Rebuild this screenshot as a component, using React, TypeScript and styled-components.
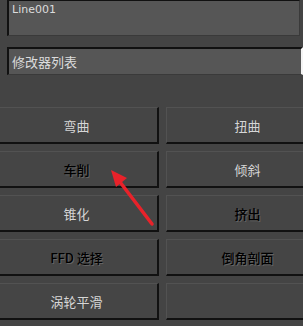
import styled, { createGlobalStyle } from 'styled-components'

const GlobalStyle = createGlobalStyle`
    html, body {
        margin: 0;
        padding: 0;
        background: #444444;
        overflow: hidden;
    }
`

const modifiers: { label: string; dark?: boolean }[] = [
    { label: '弯曲' },
    { label: '扭曲' },
    { label: '车削', dark: true },
    { label: '倾斜' },
    { label: '锥化' },
    { label: '挤出', dark: true },
    { label: 'FFD 选择', dark: true },
    { label: '倒角剖面', dark: true },
    { label: '涡轮平滑' },
    { label: '' },
    { label: '' },
    { label: '' },
]

export default function App() {
    return <Panel>
        <GlobalStyle />
        <NameField>Line001</NameField>
        <ModifierList>修改器列表</ModifierList>
        <ButtonGrid>
            {modifiers.map((m, i) => (
                <ModButton key={i} $dark={m.dark}>{m.label}</ModButton>
            ))}
        </ButtonGrid>
        <Arrow width="60" height="70" viewBox="0 0 60 70">
            <line x1="50" y1="59" x2="18" y2="17" stroke="#e8222a" strokeWidth="3.5" strokeLinecap="round" />
            <polygon points="9,5 25,13 14,22" fill="#e8222a" />
        </Arrow>
    </Panel>
}

const Panel = styled.div`
    position: relative;
    width: 303px;
    height: 326px;
    overflow: hidden;
    background: #444444;
    font-family: "Noto Sans CJK SC", "DejaVu Sans", sans-serif;
`

const NameField = styled.div`
    box-sizing: border-box;
    margin-left: 7px;
    width: 293px;
    height: 36px;
    padding: 2px 0 0 3px;
    background: #565656;
    border-top: 1px solid #111;
    border-left: 2px solid #111;
    border-right: 1px solid #3a3a3a;
    border-bottom: 1px solid #3a3a3a;
    color: #dcdcdc;
    font-family: "DejaVu Sans", sans-serif;
    font-size: 11px;
    line-height: 13px;
`

const ModifierList = styled.div`
    box-sizing: border-box;
    margin: 11px 0 0 7px;
    width: 296px;
    height: 28px;
    padding-left: 3px;
    background: #565656;
    border-top: 2px solid #111;
    border-left: 2px solid #111;
    border-right: 2px solid #f4f4f4;
    border-bottom: 1px solid #3a3a3a;
    color: #dcdcdc;
    font-size: 13px;
    line-height: 25px;
`

const ButtonGrid = styled.div`
    display: grid;
    grid-template-columns: 164px 164px;
    grid-auto-rows: 37px;
    column-gap: 7px;
    row-gap: 7px;
    margin: 32px 0 0 -5px;
`

const ModButton = styled.div<{ $dark?: boolean }>`
    box-sizing: border-box;
    display: flex;
    align-items: center;
    justify-content: center;
    background: #454545;
    border-top: 1px solid #525252;
    border-left: 1px solid #525252;
    border-right: 2px solid #111;
    border-bottom: 2px solid #111;
    color: ${p => p.$dark ? '#000' : '#d6d6d6'};
    text-shadow: ${p => p.$dark ? '1px 1px 0 #646464' : 'none'};
    font-weight: ${p => p.$dark ? 500 : 400};
    font-size: 13px;
`

const Arrow = styled.svg`
    position: absolute;
    left: 102px;
    top: 165px;
`
